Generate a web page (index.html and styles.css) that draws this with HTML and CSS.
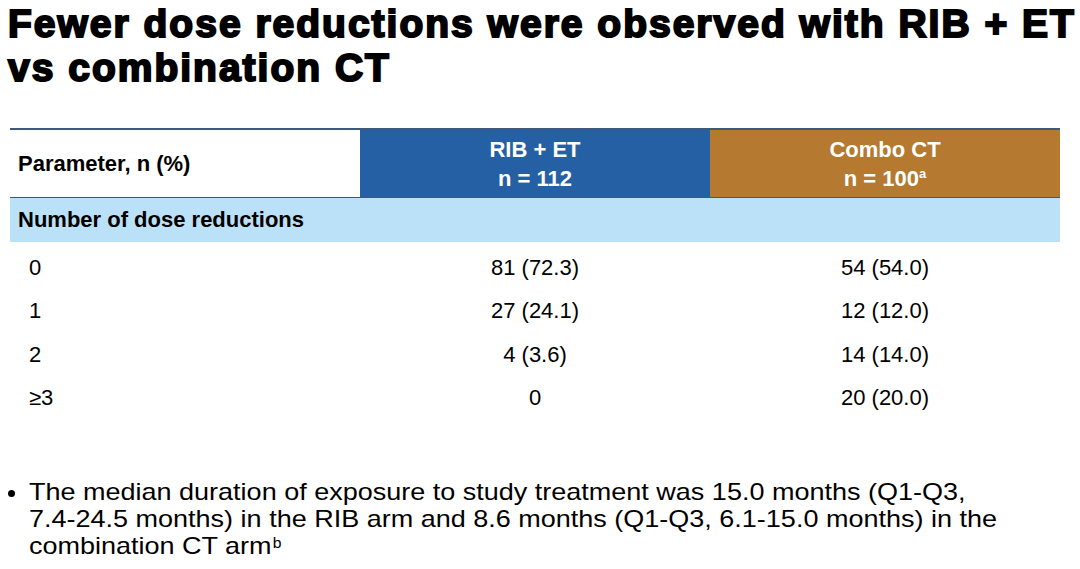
FILE: index.html
```html
<!DOCTYPE html>
<html>
<head>
<meta charset="utf-8">
<link rel="stylesheet" href="styles.css">
</head>
<body>
<div class="slide">
  <h1 class="title">Fewer dose reductions were observed with RIB + ET<br>vs combination CT</h1>
  <div class="table">
    <div class="row head">
      <div class="cell label">Parameter, n (%)</div>
      <div class="cell arm rib"><div>RIB + ET<br>n = 112</div></div>
      <div class="cell arm ct"><div>Combo CT<br>n = 100<sup>a</sup></div></div>
    </div>
    <div class="row section">
      <div class="cell label">Number of dose reductions</div>
      <div class="cell"></div>
      <div class="cell"></div>
    </div>
    <div class="body">
      <div class="row data">
        <div class="cell label">0</div>
        <div class="cell">81 (72.3)</div>
        <div class="cell">54 (54.0)</div>
      </div>
      <div class="row data">
        <div class="cell label">1</div>
        <div class="cell">27 (24.1)</div>
        <div class="cell">12 (12.0)</div>
      </div>
      <div class="row data">
        <div class="cell label">2</div>
        <div class="cell">4 (3.6)</div>
        <div class="cell">14 (14.0)</div>
      </div>
      <div class="row data">
        <div class="cell label">≥3</div>
        <div class="cell">0</div>
        <div class="cell">20 (20.0)</div>
      </div>
    </div>
  </div>
  <ul class="notes">
    <li><div class="note-text">The median duration of exposure to study treatment was 15.0 months (Q1-Q3, 7.4-24.5 months) in the RIB arm and 8.6 months (Q1-Q3, 6.1-15.0 months) in the combination CT arm<sup>b</sup></div></li>
  </ul>
</div>
</body>
</html>
```

FILE: styles.css
```css
html, body {
  margin: 0;
  padding: 0;
  background: #ffffff;
}
.slide {
  width: 1080px;
  height: 569px;
  overflow: hidden;
}
.title {
  margin: 0;
  padding: 2px 0 0 8px;
  font-family: "Liberation Sans", Arial, sans-serif;
  font-weight: 700;
  font-size: 39px;
  line-height: 44px;
  letter-spacing: 2px;
  -webkit-text-stroke: 2px #000;
  color: #000;
  white-space: nowrap;
}
.table {
  margin: 38px 0 0 10px;
  width: 1050px;
  border-top: 2px solid #3d5a7a;
  font-family: "Liberation Sans", Arial, sans-serif;
  font-size: 22px;
  color: #000;
}
.row {
  display: grid;
  grid-template-columns: 350px 350px 350px;
}
.cell {
  display: flex;
  align-items: center;
  justify-content: center;
  text-align: center;
}
.cell.label {
  justify-content: flex-start;
  padding-left: 8px;
}
.head {
  height: 67px;
  border-bottom: 1px solid #3d5a7a;
  font-weight: 700;
}
.head .arm {
  color: #ffffff;
  line-height: 29px;
}
.head .rib { background: #2660a4; }
.head .ct { background: #b5792f; }
.head sup {
  font-size: 13px;
  vertical-align: 8px;
  line-height: 0;
}
.section {
  height: 44px;
  background: #bbe1f8;
  font-weight: 700;
}
.body {
  padding-top: 4px;
}
.data {
  height: 43.5px;
}
.data .label {
  padding-left: 19px;
}
.notes {
  margin: 58px 0 0 0;
  padding: 0 0 0 8px;
  list-style: none;
  font-family: "Liberation Sans", Arial, sans-serif;
  font-size: 24px;
  line-height: 27px;
  color: #000;
}
.notes li {
  position: relative;
  padding-left: 21px;
}
.notes li::before {
  content: "";
  position: absolute;
  left: 0;
  top: 12px;
  width: 7px;
  height: 7px;
  border-radius: 50%;
  background: #000;
}
.note-text {
  width: 880px;
  transform: scaleX(1.125);
  transform-origin: left top;
}
.notes sup {
  font-size: 14px;
  vertical-align: 6px;
  line-height: 0;
  margin-left: 1px;
}
```
